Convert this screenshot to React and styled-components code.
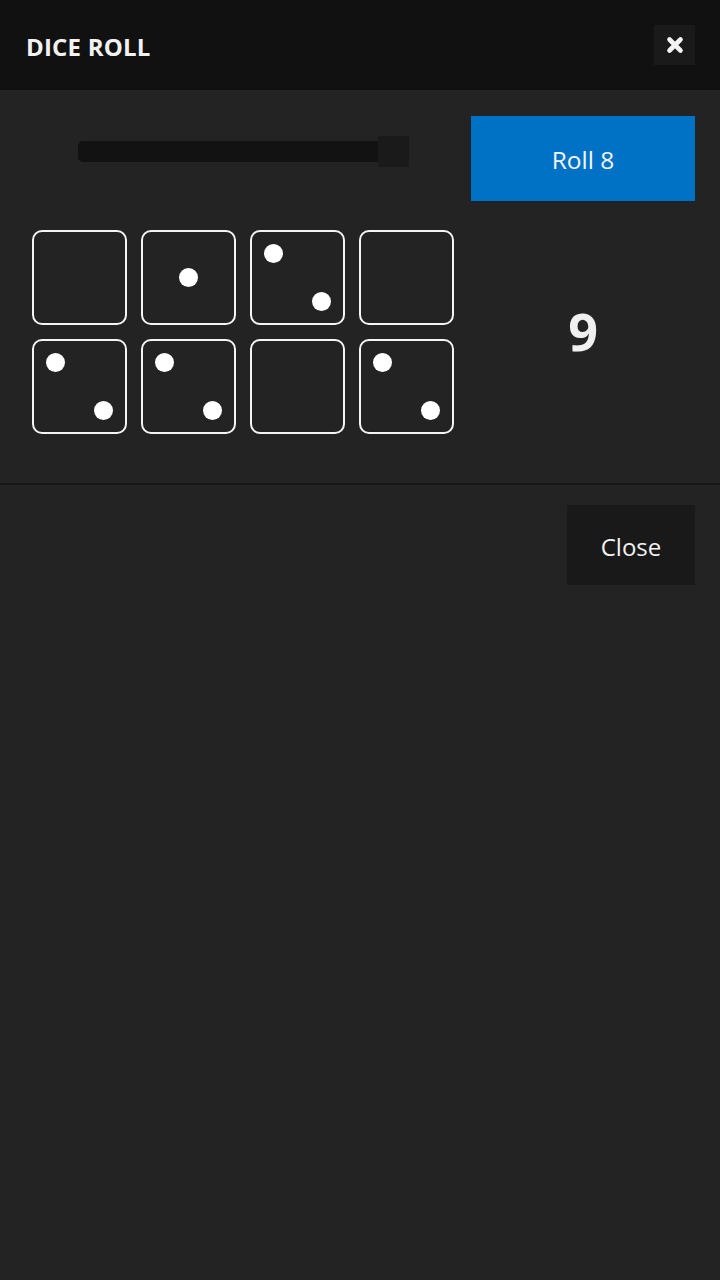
import React from "react";
import styled, { createGlobalStyle } from "styled-components";

const Global = createGlobalStyle`
  html, body { margin: 0; padding: 0; background: #232323; }
  body { font-family: "Open Sans", "Noto Sans", sans-serif; color: #f2f2f2; }
  * { box-sizing: border-box; }
`;

const Page = styled.div`
  min-height: 1280px;
  background: #232323;
  display: flex;
  flex-direction: column;
`;

const Header = styled.header`
  height: 90px;
  background: #111111;
  display: flex;
  align-items: center;
  justify-content: space-between;
  padding: 0 25px 0 26px;
`;

const Title = styled.h1`
  margin: 0;
  padding-top: 2px;
  font-size: 24px;
  font-weight: 700;
  color: #f2f2f2;
  letter-spacing: 0.2px;
`;

const IconButton = styled.button`
  width: 41px;
  height: 40px;
  border: none;
  padding: 0;
  background: #1a1a1a;
  display: flex;
  align-items: center;
  justify-content: center;
  cursor: pointer;
`;

const Body = styled.section`
  display: grid;
  grid-template-columns: 422px 224px;
  grid-template-rows: 85px auto;
  column-gap: 17px;
  row-gap: 29px;
  padding: 26px 25px 49px 32px;
  border-bottom: 2px solid #181818;
`;

const SliderCell = styled.div`
  display: flex;
  justify-content: center;
  align-items: flex-start;
  padding-top: 20px;
  padding-left: 1px;
`;

const Slider = styled.div`
  position: relative;
  width: 331px;
  height: 31px;
  display: flex;
  align-items: center;
`;

const Track = styled.div`
  width: 100%;
  height: 21px;
  background: #121212;
  border-radius: 5px;
`;

const Thumb = styled.div`
  position: absolute;
  right: 0;
  top: 0;
  width: 31px;
  height: 31px;
  background: #1a1a1a;
`;

const PrimaryButton = styled.button`
  width: 224px;
  height: 85px;
  border: none;
  background: #0072c6;
  color: #f4f4f4;
  font-family: inherit;
  font-size: 24.5px;
  padding-top: 2px;
  cursor: pointer;
`;

const DiceGrid = styled.div`
  display: grid;
  grid-template-columns: repeat(4, 95px);
  grid-auto-rows: 95px;
  justify-content: space-between;
  row-gap: 14px;
`;

const Die = styled.div`
  border: 2px solid #f4f4f4;
  border-radius: 10px;
  display: grid;
  grid-template-columns: repeat(3, 1fr);
  grid-template-rows: repeat(3, 1fr);
  place-items: center;
  padding: 10px;
`;

const Pip = styled.span`
  width: 19px;
  height: 19px;
  border-radius: 50%;
  background: #ffffff;
  grid-row: ${(p) => p.$row};
  grid-column: ${(p) => p.$col};
`;

const Total = styled.div`
  display: flex;
  align-items: center;
  justify-content: center;
  font-size: 52px;
  font-weight: 700;
  color: #f0f0f0;
  padding-bottom: 4px;
`;

const Footer = styled.footer`
  display: flex;
  justify-content: flex-end;
  padding: 20px 25px;
`;

const SecondaryButton = styled.button`
  width: 128px;
  height: 80px;
  border: none;
  background: #191919;
  color: #f2f2f2;
  font-family: inherit;
  font-size: 24px;
  padding-top: 3px;
  cursor: pointer;
`;

const pipLayouts = {
  0: [],
  1: [[2, 2]],
  2: [
    [1, 1],
    [3, 3],
  ],
};

const dice = [0, 1, 2, 0, 2, 2, 0, 2];

export default function App() {
  return (
    <Page>
      <Global />
      <Header>
        <Title>DICE ROLL</Title>
        <IconButton aria-label="Close">
          <svg width="20" height="20" viewBox="0 0 20 20">
            <path
              d="M4.5 4.5 L15.5 15.5 M15.5 4.5 L4.5 15.5"
              stroke="#f4f4f4"
              strokeWidth="4.6"
              strokeLinecap="round"
              fill="none"
            />
          </svg>
        </IconButton>
      </Header>
      <Body>
        <SliderCell>
          <Slider>
            <Track />
            <Thumb />
          </Slider>
        </SliderCell>
        <PrimaryButton>Roll 8</PrimaryButton>
        <DiceGrid>
          {dice.map((v, i) => (
            <Die key={i}>
              {pipLayouts[v].map(([r, c], j) => (
                <Pip key={j} $row={r} $col={c} />
              ))}
            </Die>
          ))}
        </DiceGrid>
        <Total>9</Total>
      </Body>
      <Footer>
        <SecondaryButton>Close</SecondaryButton>
      </Footer>
    </Page>
  );
}
